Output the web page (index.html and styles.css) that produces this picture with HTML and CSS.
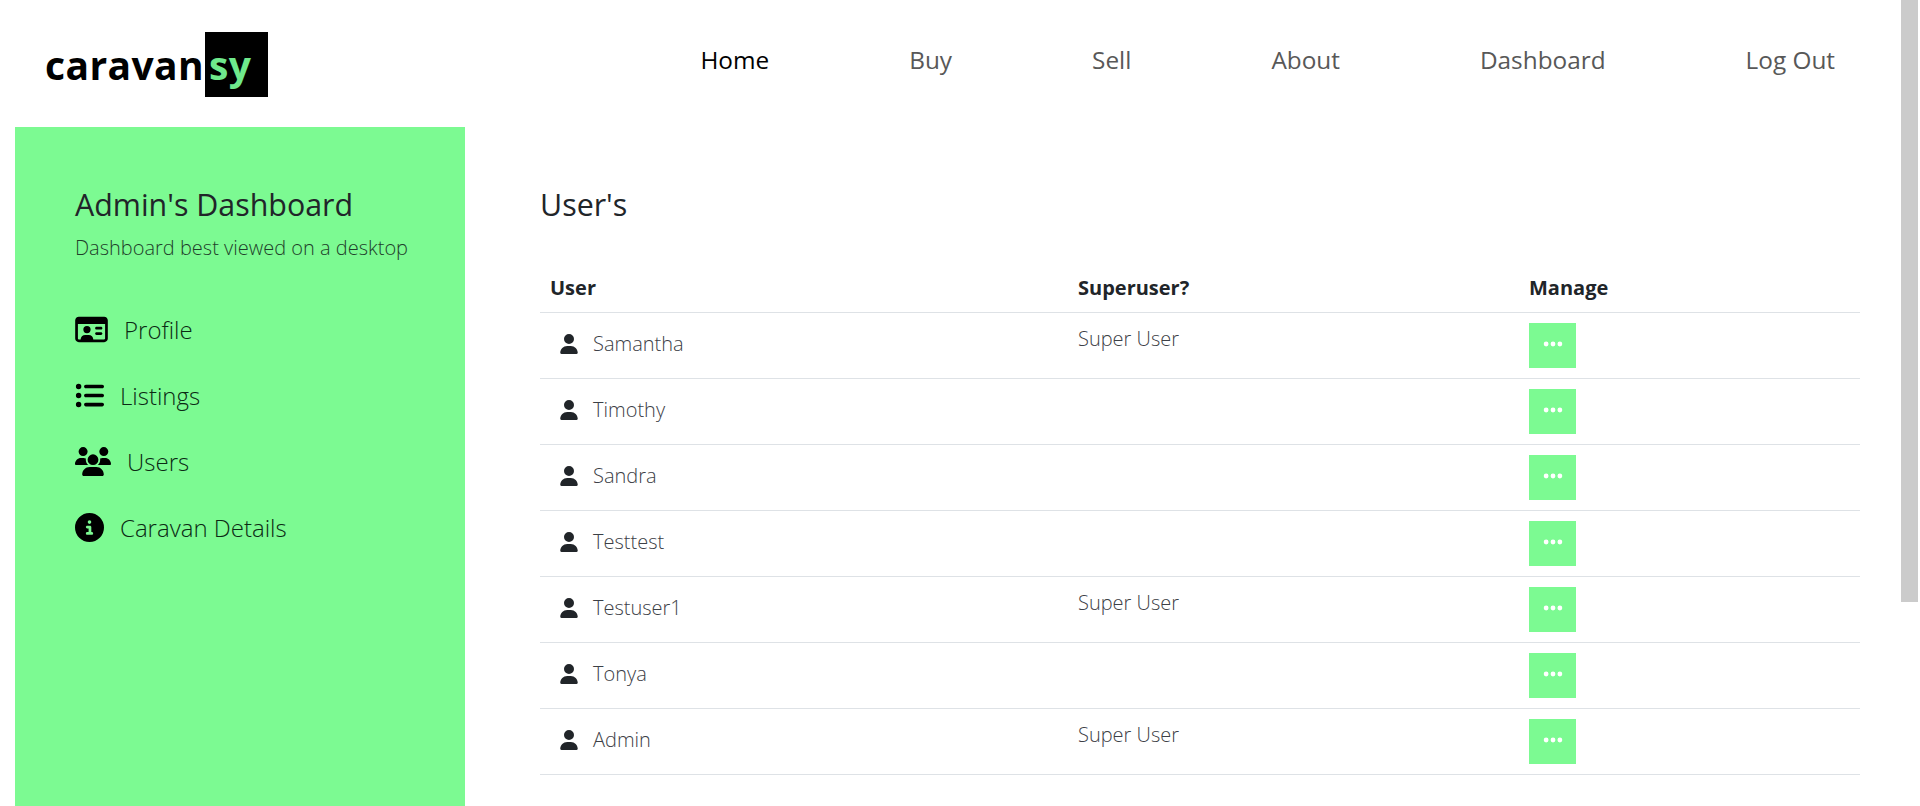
FILE: index.html
```html
<!DOCTYPE html>
<html lang="en">
<head>
<meta charset="utf-8">
<title>Caravansy</title>
<link rel="stylesheet" href="styles.css">
</head>
<body>
<svg class="defs" width="0" height="0" aria-hidden="true">
  <symbol id="i-user" viewBox="0 0 448 512"><path d="M224 256A128 128 0 1 0 224 0a128 128 0 1 0 0 256zm-45.7 48C79.8 304 0 383.8 0 482.3C0 498.7 13.3 512 29.7 512H418.3c16.4 0 29.7-13.3 29.7-29.7C448 383.8 368.2 304 269.7 304H178.3z"/></symbol>
  <symbol id="i-dots" viewBox="0 0 448 512"><path d="M8 256a56 56 0 1 1 112 0A56 56 0 1 1 8 256zm160 0a56 56 0 1 1 112 0 56 56 0 1 1 -112 0zm216-56a56 56 0 1 1 0 112 56 56 0 1 1 0-112z"/></symbol>
</svg>
<div class="page">
  <header class="topbar">
    <a class="logo">caravan<span class="logo-box">sy</span></a>
    <nav class="nav">
      <a class="nav-link active">Home</a>
      <a class="nav-link">Buy</a>
      <a class="nav-link">Sell</a>
      <a class="nav-link">About</a>
      <a class="nav-link">Dashboard</a>
      <a class="nav-link">Log Out</a>
    </nav>
  </header>
  <div class="layout">
    <aside class="sidebar">
      <h2 class="side-title">Admin's Dashboard</h2>
      <p class="side-sub">Dashboard best viewed on a desktop</p>
      <ul class="side-menu">
        <li class="side-item">
          <svg class="side-icon wide-id" viewBox="0 0 576 512"><path d="M528 160V416c0 8.8-7.2 16-16 16H320c0-44.2-35.8-80-80-80H176c-44.2 0-80 35.8-80 80H64c-8.8 0-16-7.2-16-16V160H528zM64 32C28.7 32 0 60.7 0 96V416c0 35.3 28.7 64 64 64H512c35.3 0 64-28.7 64-64V96c0-35.3-28.7-64-64-64H64zM272 256a64 64 0 1 0 -128 0 64 64 0 1 0 128 0zm104-48c-13.3 0-24 10.7-24 24s10.7 24 24 24h80c13.3 0 24-10.7 24-24s-10.7-24-24-24H376zm0 96c-13.3 0-24 10.7-24 24s10.7 24 24 24h80c13.3 0 24-10.7 24-24s-10.7-24-24-24H376z"/></svg>
          <span>Profile</span>
        </li>
        <li class="side-item">
          <svg class="side-icon" viewBox="0 0 512 512"><path d="M64 144a48 48 0 1 0 0-96 48 48 0 1 0 0 96zM192 64c-17.7 0-32 14.3-32 32s14.3 32 32 32H480c17.7 0 32-14.3 32-32s-14.3-32-32-32H192zm0 160c-17.7 0-32 14.3-32 32s14.3 32 32 32H480c17.7 0 32-14.3 32-32s-14.3-32-32-32H192zm0 160c-17.7 0-32 14.3-32 32s14.3 32 32 32H480c17.7 0 32-14.3 32-32s-14.3-32-32-32H192zM64 464a48 48 0 1 0 0-96 48 48 0 1 0 0 96zm48-208a48 48 0 1 0 -96 0 48 48 0 1 0 96 0z"/></svg>
          <span>Listings</span>
        </li>
        <li class="side-item">
          <svg class="side-icon wide-users" viewBox="0 0 640 512"><path d="M144 0a80 80 0 1 1 0 160A80 80 0 1 1 144 0zM512 0a80 80 0 1 1 0 160A80 80 0 1 1 512 0zM0 298.7C0 239.8 47.8 192 106.7 192h42.7c15.9 0 31 3.5 44.6 9.7c-1.3 7.2-1.9 14.7-1.9 22.3c0 38.2 16.8 72.5 43.3 96c-.2 0-.4 0-.7 0H21.3C9.6 320 0 310.4 0 298.7zM405.3 320c-.2 0-.4 0-.7 0c26.6-23.5 43.3-57.8 43.3-96c0-7.6-.7-15-1.9-22.3c13.6-6.3 28.7-9.7 44.6-9.7h42.7C592.2 192 640 239.8 640 298.7c0 11.8-9.6 21.3-21.3 21.3H405.3zM224 224a96 96 0 1 1 192 0 96 96 0 1 1 -192 0zM128 485.3C128 411.7 187.7 352 261.3 352H378.7C452.3 352 512 411.7 512 485.3c0 14.7-11.9 26.7-26.7 26.7H154.7c-14.7 0-26.7-11.9-26.7-26.7z"/></svg>
          <span>Users</span>
        </li>
        <li class="side-item">
          <svg class="side-icon" viewBox="0 0 512 512"><path d="M256 512A256 256 0 1 0 256 0a256 256 0 1 0 0 512zM216 336h24V272H216c-13.3 0-24-10.7-24-24s10.7-24 24-24h48c13.3 0 24 10.7 24 24v88h8c13.3 0 24 10.7 24 24s-10.7 24-24 24H216c-13.3 0-24-10.7-24-24s10.7-24 24-24zm40-208a32 32 0 1 1 0 64 32 32 0 1 1 0-64z"/></svg>
          <span>Caravan Details</span>
        </li>
      </ul>
    </aside>
    <main class="content">
      <h2 class="content-title">User's</h2>
      <table class="users">
        <colgroup><col class="col-user"><col class="col-super"><col class="col-manage"></colgroup>
        <thead>
          <tr><th>User</th><th>Superuser?</th><th>Manage</th></tr>
        </thead>
        <tbody>
          <tr><td><div class="user-cell"><svg class="user-icon"><use href="#i-user"/></svg>Samantha</div></td><td>Super User</td><td><button class="manage-btn"><svg class="dots"><use href="#i-dots"/></svg></button></td></tr>
          <tr><td><div class="user-cell"><svg class="user-icon"><use href="#i-user"/></svg>Timothy</div></td><td></td><td><button class="manage-btn"><svg class="dots"><use href="#i-dots"/></svg></button></td></tr>
          <tr><td><div class="user-cell"><svg class="user-icon"><use href="#i-user"/></svg>Sandra</div></td><td></td><td><button class="manage-btn"><svg class="dots"><use href="#i-dots"/></svg></button></td></tr>
          <tr><td><div class="user-cell"><svg class="user-icon"><use href="#i-user"/></svg>Testtest</div></td><td></td><td><button class="manage-btn"><svg class="dots"><use href="#i-dots"/></svg></button></td></tr>
          <tr><td><div class="user-cell"><svg class="user-icon"><use href="#i-user"/></svg>Testuser1</div></td><td>Super User</td><td><button class="manage-btn"><svg class="dots"><use href="#i-dots"/></svg></button></td></tr>
          <tr><td><div class="user-cell"><svg class="user-icon"><use href="#i-user"/></svg>Tonya</div></td><td></td><td><button class="manage-btn"><svg class="dots"><use href="#i-dots"/></svg></button></td></tr>
          <tr><td><div class="user-cell"><svg class="user-icon"><use href="#i-user"/></svg>Admin</div></td><td>Super User</td><td><button class="manage-btn"><svg class="dots"><use href="#i-dots"/></svg></button></td></tr>
        </tbody>
      </table>
    </main>
  </div>
</div>
<div class="scroll-thumb"></div>
</body>
</html>
```
FILE: styles.css
```css
* { box-sizing: border-box; }
html, body { height: 100%; }
body {
  margin: 0;
  overflow: hidden;
  background: #fff;
  font-family: "Open Sans", "Liberation Sans", sans-serif;
  color: #212529;
}
.defs { position: absolute; }
.page { width: 1901px; height: 806px; overflow: hidden; }

.topbar {
  height: 127px;
  display: flex;
  align-items: flex-start;
  justify-content: space-between;
  padding: 32px 66px 0 45px;
}
.logo {
  font-size: 39px;
  font-weight: 700;
  line-height: 65px;
  color: #000;
  letter-spacing: 0.4px;
}
.logo-box {
  display: inline-block;
  width: 63px;
  height: 65px;
  margin-left: 1px;
  padding-left: 4px;
  background: #000;
  color: #6fe98c;
  vertical-align: top;
}
.nav { display: flex; gap: 140px; padding-top: 10px; }
.nav-link {
  font-size: 24.35px;
  line-height: 36px;
  color: #585858;
}
.nav-link.active { color: #000; }

.layout { display: flex; padding-left: 15px; }
.sidebar {
  width: 450px;
  height: 679px;
  padding: 57px 0 0 60px;
  background: #7cfa92;
}
.side-title {
  margin: 0;
  font-size: 30.4px;
  font-weight: 400;
  line-height: 42px;
  color: #212529;
}
.side-sub {
  margin: 7px 0 0;
  font-size: 20px;
  font-weight: 300;
  line-height: 30px;
  color: #1f3f2a;
}
.side-menu { list-style: none; margin: 33px 0 0; padding: 0; }
.side-item {
  display: flex;
  align-items: center;
  gap: 16px;
  height: 66px;
  font-size: 24px;
  font-weight: 300;
  color: #0b2a14;
}
.side-icon { width: 29px; height: 29px; fill: #000; flex: none; }
.wide-id { width: 33px; }
.wide-users { width: 36px; }

.content { width: 1320px; margin-left: 75px; padding-top: 57px; }
.content-title {
  margin: 0;
  font-size: 30.4px;
  font-weight: 400;
  line-height: 42px;
  color: #212529;
}
.users {
  width: 1320px;
  margin-top: 44px;
  border-collapse: collapse;
  table-layout: fixed;
}
.col-user { width: 528px; }
.col-super { width: 451px; }
.col-manage { width: 341px; }
.users th {
  height: 42px;
  padding: 2px 10px 8px;
  text-align: left;
  font-size: 20px;
  font-weight: 700;
  line-height: 27px;
  border-bottom: 1px solid #dee2e6;
}
.users td {
  height: 66px;
  padding: 10px;
  vertical-align: top;
  font-size: 20px;
  font-weight: 300;
  line-height: 32px;
  color: #3c4046;
  border-bottom: 1px solid #dee2e6;
}
.user-cell {
  display: flex;
  align-items: center;
  gap: 15px;
  height: 42px;
  padding-left: 10px;
}
.user-icon { width: 18px; height: 20px; fill: #212529; flex: none; }
.manage-btn {
  display: flex;
  align-items: center;
  justify-content: center;
  width: 47px;
  height: 45px;
  padding: 0 0 2px;
  border: 0;
  background: #7cfa92;
}
.dots { width: 20px; height: 22px; fill: #fff; }

.scroll-thumb {
  position: absolute;
  top: 0;
  left: 1901px;
  width: 17px;
  height: 602px;
  background: #cbcbcb;
}
```
